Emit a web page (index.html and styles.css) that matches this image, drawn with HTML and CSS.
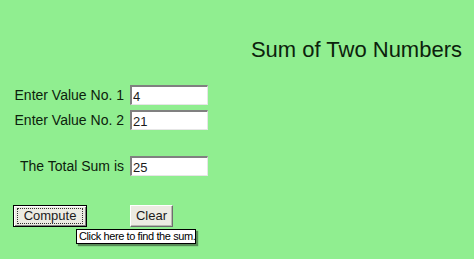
FILE: index.html
```html
<!DOCTYPE html>
<html>
<head>
<meta charset="utf-8">
<title>Sum of Two Numbers</title>
<link rel="stylesheet" href="styles.css">
</head>
<body>
<div class="page">
  <h1 class="title">Sum of Two Numbers</h1>
  <div class="form">
    <label class="lbl">Enter Value No. 1</label>
    <input class="field" type="text" value="4">
    <label class="lbl">Enter Value No. 2</label>
    <input class="field" type="text" value="21">
    <label class="lbl total-lbl">The Total Sum is</label>
    <input class="field total-field" type="text" value="25">
    <button class="btn btn-default"><span class="focus">Compute</span></button>
    <button class="btn btn-clear">Clear</button>
  </div>
  <div class="tooltip">Click here to find the sum.</div>
</div>
</body>
</html>
```
FILE: styles.css
```css
html, body {
  margin: 0;
  padding: 0;
  background: #90ee90;
}
.page {
  position: relative;
  width: 474px;
  height: 259px;
  box-sizing: border-box;
  padding: 38px 12px 0 12px;
  font-family: "Liberation Sans", Arial, sans-serif;
  color: #0c220c;
  overflow: hidden;
}
.title {
  margin: 0;
  font-size: 22px;
  line-height: 24px;
  font-weight: normal;
  text-align: right;
}
.form {
  margin-top: 23px;
  display: grid;
  grid-template-columns: 112px 78px;
  column-gap: 6px;
  row-gap: 5px;
  align-items: center;
}
.lbl {
  font-size: 14px;
  line-height: 16px;
  text-align: right;
  white-space: nowrap;
}
.field {
  box-sizing: border-box;
  width: 78px;
  height: 20px;
  margin: 0;
  padding: 1px 1px 0 1px;
  font-family: "Liberation Sans", Arial, sans-serif;
  font-size: 13px;
  color: #1a1a1a;
  background: #ffffff;
  border-top: 2px solid #808080;
  border-left: 2px solid #808080;
  border-right: 1px solid #e6e6e6;
  border-bottom: 1px solid #e6e6e6;
  outline: none;
}
.total-lbl, .total-field {
  margin-top: 21px;
}
.btn {
  box-sizing: border-box;
  margin: 0;
  margin-top: 24px;
  font-family: "Liberation Sans", Arial, sans-serif;
  font-size: 13px;
  color: #1a1a1a;
  background: #ecebe2;
  height: 22px;
  padding: 0;
  cursor: default;
}
.btn-default {
  justify-self: start;
  width: 74px;
  margin-left: 1px;
  border: 1px solid #000;
  box-shadow: inset 1px 1px 0 #ffffff, inset -1px -1px 0 #808080;
  display: flex;
  align-items: center;
  justify-content: center;
}
.focus {
  display: block;
  width: 64px;
  height: 14px;
  line-height: 14px;
  border: 1px dotted #333;
}
.btn-clear {
  justify-self: start;
  width: 43px;
  border-top: 1px solid #ffffff;
  border-left: 1px solid #ffffff;
  border-right: 1px solid #6e6e6e;
  border-bottom: 1px solid #6e6e6e;
  box-shadow: inset -1px -1px 0 #b8b8b0;
  margin-top: 23px;
}
.tooltip {
  position: absolute;
  left: 76px;
  top: 229px;
  box-sizing: border-box;
  width: 120px;
  height: 15px;
  padding: 0 0 0 2px;
  font-family: "Liberation Sans", Arial, sans-serif;
  font-size: 11px;
  letter-spacing: -0.4px;
  line-height: 13px;
  color: #000;
  background: #ffffff;
  border: 1px solid #000;
  box-shadow: 2px 2px 1px rgba(40, 60, 40, 0.55);
  white-space: nowrap;
}
```
